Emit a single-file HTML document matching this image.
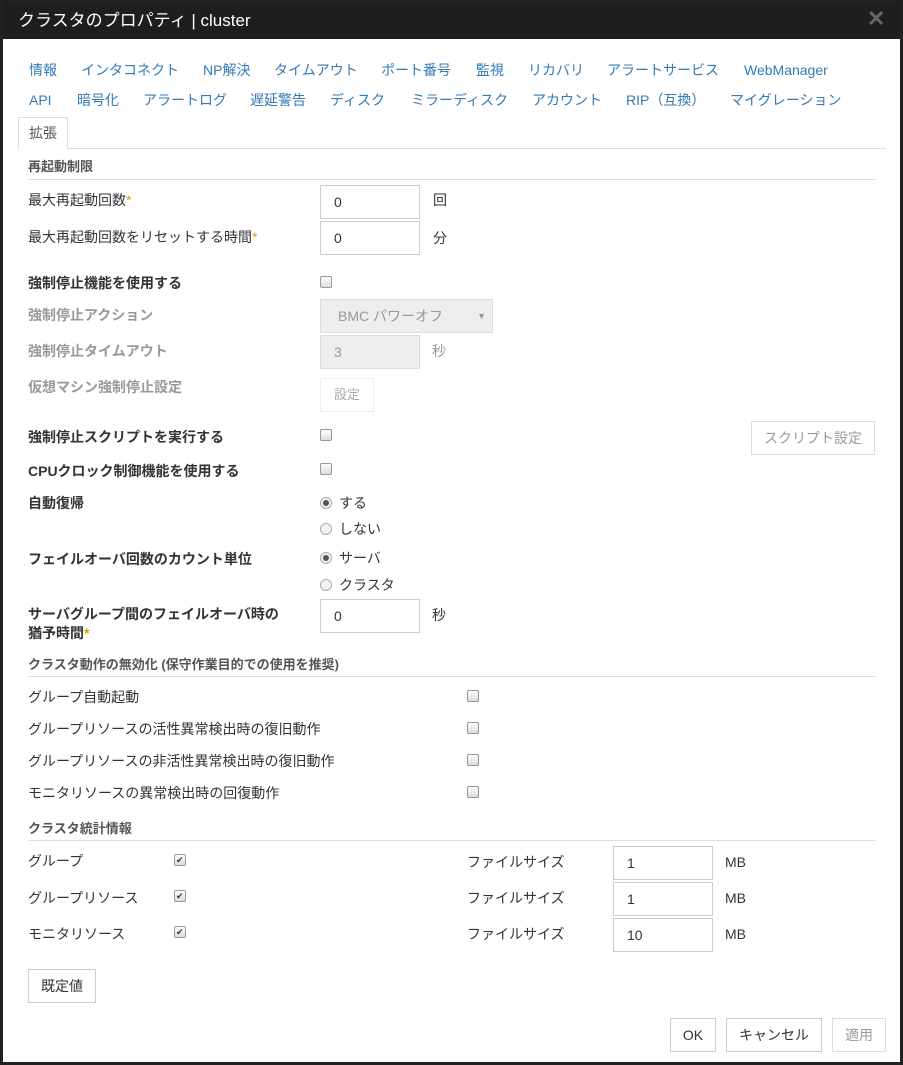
<!DOCTYPE html>
<html><head><meta charset="utf-8"><style>
*{box-sizing:border-box;margin:0;padding:0}
body{width:903px;height:1065px;background:#222;position:relative;overflow:hidden;font-family:"Liberation Sans","Noto Sans CJK JP",sans-serif;font-size:14px;color:#333}
.dlg{position:absolute;left:3px;top:2px;width:897px;height:1060px;background:#fff}
.title{position:absolute;left:3px;top:2px;width:897px;height:37px;background:#1e1e1e;color:#fff;font-size:17px;line-height:37px;padding-left:15px}
.x{position:absolute;left:867px;top:6px;color:#666;font-size:22px;font-weight:bold;line-height:26px}
.a{position:absolute;white-space:nowrap;line-height:20px}
.t{color:#337ab7}
.b{font-weight:bold}
.g{color:#999}
.h{font-weight:bold;color:#555;font-size:13px}
.ln{position:absolute;height:1px;background:#ddd}
.in{position:absolute;width:100px;height:34px;border:1px solid #ccc;padding-left:13px;line-height:32px;font-size:14px}
.dis{background:#eee;color:#999;border-color:#ddd}
.cb{position:absolute;width:12px;height:12px;border:1px solid #999;border-radius:2px;background:linear-gradient(#fdfdfd,#ddd)}
.ck::after{content:"✔";position:absolute;left:1px;top:-3px;font-size:9px;line-height:16px;color:#333}
.rd{position:absolute;width:12px;height:12px;border:1px solid #aaa;border-radius:50%;background:#f3f3f3}
.rd.on::after{content:"";position:absolute;left:2px;top:2px;width:6px;height:6px;border-radius:50%;background:#555}
.btn{position:absolute;border:1px solid #ccc;text-align:center;line-height:32px;height:34px;background:#fff}
</style></head><body>
<div class="dlg"></div>
<div class="title">クラスタのプロパティ | cluster</div>
<div class="x">✕</div>

<div class="a t" style="left:29px;top:60px">情報</div>
<div class="a t" style="left:81px;top:60px">インタコネクト</div>
<div class="a t" style="left:203px;top:60px">NP解決</div>
<div class="a t" style="left:274px;top:60px">タイムアウト</div>
<div class="a t" style="left:381px;top:60px">ポート番号</div>
<div class="a t" style="left:476px;top:60px">監視</div>
<div class="a t" style="left:528px;top:60px">リカバリ</div>
<div class="a t" style="left:607px;top:60px">アラートサービス</div>
<div class="a t" style="left:744px;top:60px">WebManager</div>
<div class="a t" style="left:29px;top:90px">API</div>
<div class="a t" style="left:77px;top:90px">暗号化</div>
<div class="a t" style="left:143px;top:90px">アラートログ</div>
<div class="a t" style="left:250px;top:90px">遅延警告</div>
<div class="a t" style="left:330px;top:90px">ディスク</div>
<div class="a t" style="left:411px;top:90px">ミラーディスク</div>
<div class="a t" style="left:532px;top:90px">アカウント</div>
<div class="a t" style="left:626px;top:90px">RIP（互換）</div>
<div class="a t" style="left:730px;top:90px">マイグレーション</div>
<div class="ln" style="left:18px;top:148px;width:868px"></div>
<div style="position:absolute;left:18px;top:117px;width:50px;height:32px;border:1px solid #ddd;border-bottom:none;background:#fff;text-align:center;line-height:30px;color:#555">拡張</div>

<div class="a h" style="left:28px;top:157px">再起動制限</div>
<div class="ln" style="left:28px;top:179px;width:848px"></div>
<div class="a" style="left:28px;top:190px">最大再起動回数<span style="color:#e0a000">*</span></div>
<div class="in" style="left:320px;top:185px">0</div><div class="a" style="left:433px;top:190px">回</div>
<div class="a" style="left:28px;top:227px">最大再起動回数をリセットする時間<span style="color:#e0a000">*</span></div>
<div class="in" style="left:320px;top:221px">0</div><div class="a" style="left:433px;top:228px">分</div>

<div class="a b" style="left:28px;top:273px">強制停止機能を使用する</div><div class="cb" style="left:320px;top:276px"></div>
<div class="a b g" style="left:28px;top:305px">強制停止アクション</div>
<div class="in dis" style="left:320px;top:299px;width:173px;padding-left:17px">BMC パワーオフ<span style="position:absolute;right:6px;font-size:9px">▼</span></div>
<div class="a b g" style="left:28px;top:341px">強制停止タイムアウト</div>
<div class="in dis" style="left:320px;top:335px">3</div><div class="a g" style="left:432px;top:341px">秒</div>
<div class="a b g" style="left:28px;top:377px">仮想マシン強制停止設定</div>
<div class="btn" style="left:320px;top:378px;width:54px;color:#aaa;border-color:#eee;font-size:13px">設定</div>

<div class="a b" style="left:28px;top:427px">強制停止スクリプトを実行する</div><div class="cb" style="left:320px;top:429px"></div>
<div class="btn" style="left:751px;top:421px;width:124px;color:#999;border-color:#ddd">スクリプト設定</div>
<div class="a b" style="left:28px;top:461px">CPUクロック制御機能を使用する</div><div class="cb" style="left:320px;top:463px"></div>
<div class="a b" style="left:28px;top:493px">自動復帰</div>
<div class="rd on" style="left:320px;top:497px"></div><div class="a" style="left:339px;top:493px">する</div>
<div class="rd" style="left:320px;top:523px"></div><div class="a" style="left:339px;top:519px">しない</div>
<div class="a b" style="left:28px;top:549px">フェイルオーバ回数のカウント単位</div>
<div class="rd on" style="left:320px;top:552px"></div><div class="a" style="left:339px;top:548px">サーバ</div>
<div class="rd" style="left:320px;top:579px"></div><div class="a" style="left:339px;top:575px">クラスタ</div>
<div class="a b" style="left:28px;top:604px">サーバグループ間のフェイルオーバ時の</div>
<div class="a b" style="left:28px;top:623px">猶予時間<span style="color:#e0a000">*</span></div>
<div class="in" style="left:320px;top:599px">0</div><div class="a" style="left:432px;top:605px">秒</div>

<div class="a h" style="left:28px;top:655px">クラスタ動作の無効化 (保守作業目的での使用を推奨)</div>
<div class="ln" style="left:28px;top:676px;width:848px"></div>
<div class="a" style="left:28px;top:687px">グループ自動起動</div><div class="cb" style="left:467px;top:690px"></div>
<div class="a" style="left:28px;top:719px">グループリソースの活性異常検出時の復旧動作</div><div class="cb" style="left:467px;top:722px"></div>
<div class="a" style="left:28px;top:751px">グループリソースの非活性異常検出時の復旧動作</div><div class="cb" style="left:467px;top:754px"></div>
<div class="a" style="left:28px;top:783px">モニタリソースの異常検出時の回復動作</div><div class="cb" style="left:467px;top:786px"></div>

<div class="a h" style="left:28px;top:819px">クラスタ統計情報</div>
<div class="ln" style="left:28px;top:840px;width:848px"></div>
<div class="a" style="left:28px;top:851px">グループ</div><div class="cb ck" style="left:174px;top:854px"></div>
<div class="a" style="left:467px;top:852px">ファイルサイズ</div><div class="in" style="left:613px;top:846px">1</div><div class="a" style="left:725px;top:852px">MB</div>
<div class="a" style="left:28px;top:888px">グループリソース</div><div class="cb ck" style="left:174px;top:890px"></div>
<div class="a" style="left:467px;top:888px">ファイルサイズ</div><div class="in" style="left:613px;top:882px">1</div><div class="a" style="left:725px;top:888px">MB</div>
<div class="a" style="left:28px;top:924px">モニタリソース</div><div class="cb ck" style="left:174px;top:926px"></div>
<div class="a" style="left:467px;top:924px">ファイルサイズ</div><div class="in" style="left:613px;top:918px">10</div><div class="a" style="left:725px;top:924px">MB</div>

<div class="btn" style="left:28px;top:969px;width:68px">既定値</div>
<div class="btn" style="left:670px;top:1018px;width:46px">OK</div>
<div class="btn" style="left:726px;top:1018px;width:96px">キャンセル</div>
<div class="btn" style="left:832px;top:1018px;width:54px;color:#999;border-color:#ddd">適用</div>
</body></html>
